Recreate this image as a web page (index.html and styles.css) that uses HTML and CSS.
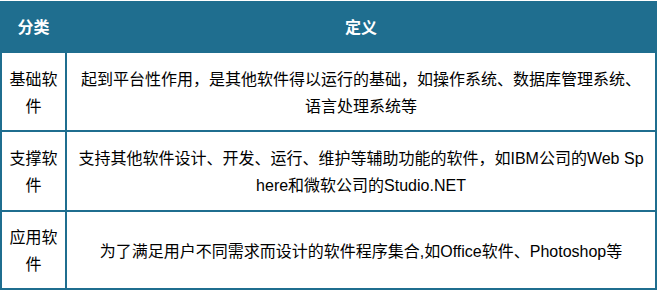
FILE: index.html
```html
<!DOCTYPE html>
<html lang="zh-CN">
<head>
<meta charset="utf-8">
<title>软件分类</title>
<link rel="stylesheet" href="styles.css">
</head>
<body>
<div class="table">
  <div class="cell head">分类</div>
  <div class="cell head">定义</div>

  <div class="cell cat">基础软件</div>
  <div class="cell def">起到平台性作用，是其他软件得以运行的基础，如操作系统、数据库管理系统、语言处理系统等</div>

  <div class="cell cat">支撑软件</div>
  <div class="cell def">支持其他软件设计、开发、运行、维护等辅助功能的软件，如IBM公司的Web Sphere和微软公司的Studio.NET</div>

  <div class="cell cat">应用软件</div>
  <div class="cell def">为了满足用户不同需求而设计的软件程序集合,如Office软件、Photoshop等</div>
</div>
</body>
</html>
```
FILE: styles.css
```css
html, body {
  margin: 0;
  padding: 0;
  background: #ffffff;
}
body {
  padding-top: 1px;
  font-family: "Liberation Sans", "Noto Sans CJK SC", sans-serif;
  font-size: 16px;
  color: #000000;
}
.table {
  width: 657px;
  box-sizing: border-box;
  padding: 2px;
  background: #1f6e8f;
  display: grid;
  grid-template-columns: 63px 588px;
  grid-template-rows: 48px 77px 78px 76px;
  gap: 2px;
}
.cell {
  display: flex;
  align-items: center;
  justify-content: center;
  text-align: center;
  line-height: 27px;
  word-break: break-all;
  background: #ffffff;
  padding-top: 2px;
}
.head {
  background: #1f6e8f;
  color: #ffffff;
  font-weight: bold;
  padding-top: 0;
}
.cat {
  padding-left: 6px;
  padding-right: 6px;
}
.def {
  padding-left: 10px;
  padding-right: 10px;
}
```
